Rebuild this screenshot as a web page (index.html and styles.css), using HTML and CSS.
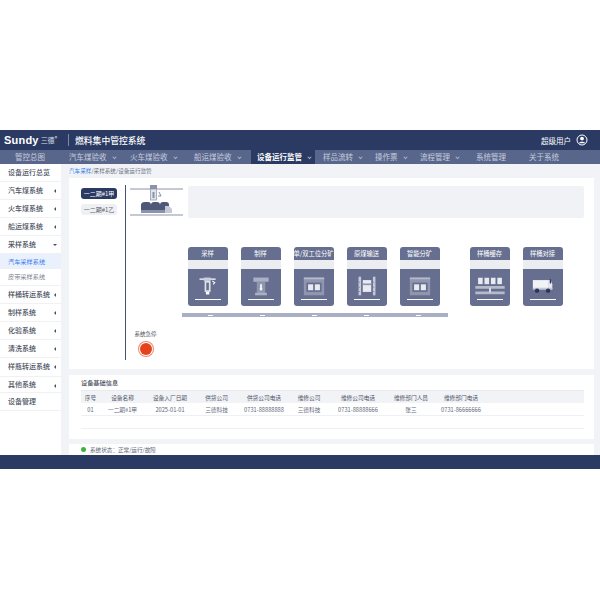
FILE: index.html
```html
<!DOCTYPE html>
<html lang="zh-CN">
<head>
    <meta charset="UTF-8">
    <meta name="viewport" content="width=device-width, initial-scale=1.0">
    <title>燃料集中管控系统</title>
    <link rel="stylesheet" href="styles.css">
</head>
<body>
    <svg class="defs" aria-hidden="true">
        <symbol id="icon-sampler" viewBox="0 0 26 26">
            <path d="M3 5h19" stroke="#fff" stroke-width="1.5"/>
            <rect x="8" y="3" width="8" height="4" fill="#c9cedc"/>
            <rect x="9" y="7" width="7" height="13" fill="#dfe2ea"/>
            <rect x="11" y="9" width="3" height="9" fill="#66708f"/>
            <rect x="10.500" y="20" width="4" height="3" fill="#fff"/>
            <path d="M18 7l3 2-2 2" fill="none" stroke="#fff" stroke-width="1.2"/>
        </symbol>
        <symbol id="icon-prep" viewBox="0 0 26 26">
            <rect x="4" y="3" width="18" height="5" fill="#aab0c4"/>
            <rect x="8" y="8" width="10" height="15" fill="#8f97b0"/>
            <rect x="6" y="21" width="14" height="3" fill="#aab0c4"/>
            <path d="M13 11v6" stroke="#fff" stroke-width="2"/>
            <path d="M11 16h4l-2 3z" fill="#fff"/>
        </symbol>
        <symbol id="icon-divider" viewBox="0 0 26 26">
            <rect x="1" y="3" width="24" height="21" fill="#9096ae"/>
            <rect x="1" y="3" width="24" height="2" fill="#b6bbcc"/>
            <rect x="4" y="9" width="18" height="11" fill="#666f8f"/>
            <rect x="6" y="11" width="6" height="7" fill="#e8eaf0"/>
            <rect x="14" y="11" width="6" height="7" fill="#e8eaf0"/>
        </symbol>
        <symbol id="icon-belt" viewBox="0 0 26 26">
            <rect x="3" y="2" width="3" height="22" fill="#c6cad8"/>
            <rect x="20" y="2" width="3" height="22" fill="#c6cad8"/>
            <rect x="8" y="6" width="10" height="14" fill="#e8eaf0"/>
            <rect x="8" y="10" width="10" height="2" fill="#9096ae"/>
            <path d="M4 8v1M4 14v1M4 19v1M21 8v1M21 14v1M21 19v1" stroke="#666f8f"/>
        </symbol>
        <symbol id="icon-cache" viewBox="0 0 32 24">
            <g fill="#e8eaf0">
                <rect x="3" y="3" width="5" height="7"/>
                <rect x="10" y="3" width="5" height="7"/>
                <rect x="17" y="3" width="5" height="7"/>
                <rect x="24" y="3" width="5" height="7"/>
            </g>
            <rect x="0" y="12" width="32" height="3" fill="#b6bbcc"/>
            <rect x="0" y="18" width="32" height="3" fill="#b6bbcc"/>
            <rect x="15" y="14" width="2" height="5" fill="#dfe2ea"/>
        </symbol>
        <symbol id="icon-van" viewBox="0 0 26 26">
            <rect x="1" y="6" width="18" height="11" fill="#f2f3f7"/>
            <path d="M19 6h3l2 5v6h-5z" fill="#e6e8ee"/>
            <rect x="21" y="5" width="1.500" height="5" fill="#2a3a63"/>
            <rect x="1" y="15" width="23" height="2" fill="#c6cad8"/>
            <circle cx="6" cy="18.500" r="2.600" fill="#2f3550"/>
            <circle cx="19" cy="18.500" r="2.600" fill="#2f3550"/>
        </symbol>
    </svg>

    <div class="app">
        <header class="topbar">
            <div class="brand">
                <span class="brand-name">Sundy</span>
                <span class="brand-cn">三德</span>
                <span class="brand-mark">®</span>
            </div>
            <h1 class="system-title">燃料集中管控系统</h1>
            <div class="user">
                <span>超级用户</span>
                <svg class="user-icon" viewBox="0 0 12 12">
                    <circle cx="6" cy="6" r="5" fill="none" stroke="#fff" stroke-width="1"/>
                    <circle cx="6" cy="4.600" r="1.900" fill="#fff"/>
                    <path d="M2.800 9.200c.5-2 5.900-2 6.400 0z" fill="#fff"/>
                </svg>
            </div>
        </header>

        <nav class="nav">
            <a class="nav-item">管控总图</a>
            <a class="nav-item">汽车煤验收<i class="chev"></i></a>
            <a class="nav-item">火车煤验收<i class="chev"></i></a>
            <a class="nav-item">船运煤验收<i class="chev"></i></a>
            <a class="nav-item active">设备运行监管<i class="chev"></i></a>
            <a class="nav-item">样品流转<i class="chev"></i></a>
            <a class="nav-item">操作票<i class="chev"></i></a>
            <a class="nav-item">流程管理<i class="chev"></i></a>
            <a class="nav-item">系统管理</a>
            <a class="nav-item">关于系统</a>
        </nav>

        <div class="content">
            <aside class="sidebar">
                <div class="side-item">设备运行总览</div>
                <div class="side-item more">汽车煤系统</div>
                <div class="side-item more">火车煤系统</div>
                <div class="side-item more">船运煤系统</div>
                <div class="side-item open">采样系统</div>
                <div class="side-sub current">汽车采样系统</div>
                <div class="side-sub last">皮带采样系统</div>
                <div class="side-item more">样桶转运系统</div>
                <div class="side-item more">制样系统</div>
                <div class="side-item more">化验系统</div>
                <div class="side-item more">清洗系统</div>
                <div class="side-item more tall">样瓶转运系统</div>
                <div class="side-item more short">其他系统</div>
                <div class="side-item">设备管理</div>
            </aside>

            <main class="main">
                <div class="crumbs"><span class="crumb-link">汽车采样</span>/采样系统/设备运行监管</div>

                <section class="panel monitor">
                    <div class="lines">
                        <button class="line-btn selected">一二期#1甲</button>
                        <button class="line-btn">一二期#1乙</button>
                    </div>
                    <div class="stage">
                        <div class="stage-top">
                            <svg class="truck" viewBox="0 0 53 32">
                                <path d="M0 4h53M0 30h53" stroke="#8b93ab" stroke-width="1.200"/>
                                <rect x="20" y="0" width="7" height="4" fill="#8b93ab"/>
                                <rect x="20.500" y="4" width="6" height="11" fill="#dfe3ea" stroke="#8b93ab" stroke-width=".7"/>
                                <rect x="22.500" y="7" width="2" height="6" fill="#8b93ab"/>
                                <path d="M29 7l2 4h-3" fill="none" stroke="#6b7490" stroke-width=".8"/>
                                <path d="M11 20q0-3 4-3h3q3 0 3 3q0-3 3-3h3q3 0 3 3q0-3 3-3h3q3 0 3 3v5H11z" fill="#4d5778"/>
                                <rect x="11" y="25" width="24" height="3" fill="#8b93ab"/>
                                <path d="M35 21h4l3 3v4h-7z" fill="#c6cad8"/>
                            </svg>
                            <div class="stage-info"></div>
                        </div>

                        <div class="cards">
                            <div class="card"><div class="card-head">采样</div><div class="card-band"></div><div class="card-body"><svg class="card-icon"><use href="#icon-sampler"/></svg><span class="card-bar"></span></div></div>
                            <div class="card"><div class="card-head">制样</div><div class="card-band"></div><div class="card-body"><svg class="card-icon"><use href="#icon-prep"/></svg><span class="card-bar"></span></div></div>
                            <div class="card"><div class="card-head clip">单/双工位分矿</div><div class="card-band"></div><div class="card-body"><svg class="card-icon"><use href="#icon-divider"/></svg><span class="card-bar"></span></div></div>
                            <div class="card"><div class="card-head">原煤输送</div><div class="card-band"></div><div class="card-body"><svg class="card-icon"><use href="#icon-belt"/></svg><span class="card-bar"></span></div></div>
                            <div class="card"><div class="card-head">智能分矿</div><div class="card-band"></div><div class="card-body"><svg class="card-icon"><use href="#icon-divider"/></svg><span class="card-bar"></span></div></div>
                            <div class="card after-gap"><div class="card-head">样桶缓存</div><div class="card-band"></div><div class="card-body"><svg class="card-icon wide"><use href="#icon-cache"/></svg><span class="card-bar"></span></div></div>
                            <div class="card"><div class="card-head">样桶对接</div><div class="card-band"></div><div class="card-body"><svg class="card-icon"><use href="#icon-van"/></svg><span class="card-bar"></span></div></div>
                        </div>

                        <div class="rail">
                            <i></i><i></i><i></i><i></i><i></i>
                        </div>

                        <div class="estop">
                            <div class="estop-label">系统急停</div>
                            <div class="estop-btn"></div>
                        </div>
                    </div>
                </section>

                <section class="panel info">
                    <h3>设备基础信息</h3>
                    <table class="info-table">
                        <colgroup>
                            <col class="c1"><col class="c2"><col class="c3"><col class="c4"><col class="c5">
                            <col class="c6"><col class="c7"><col class="c8"><col class="c9"><col>
                        </colgroup>
                        <thead>
                            <tr>
                                <th>序号</th><th>设备名称</th><th>设备入厂日期</th><th>供货公司</th><th>供货公司电话</th>
                                <th>维修公司</th><th>维修公司电话</th><th>维修部门人员</th><th>维修部门电话</th><th></th>
                            </tr>
                        </thead>
                        <tbody>
                            <tr>
                                <td>01</td><td>一二期#1甲</td><td>2025-01-01</td><td>三德科技</td><td>0731-88888888</td>
                                <td>三德科技</td><td>0731-88888666</td><td>张三</td><td>0731-86666666</td><td></td>
                            </tr>
                            <tr>
                                <td></td><td></td><td></td><td></td><td></td><td></td><td></td><td></td><td></td><td></td>
                            </tr>
                        </tbody>
                    </table>
                </section>

                <section class="panel status">
                    <span class="status-dot"></span>
                    <span>系统状态：正常/运行/故障</span>
                </section>
            </main>
        </div>

        <footer class="footer"></footer>
    </div>
</body>
</html>
```
FILE: styles.css
```css
body {
    margin: 0;
    background: #ffffff;
    font-family: "Noto Sans CJK SC", "Noto Sans", sans-serif;
    color: #444b5e;
}

.defs {
    position: absolute;
    width: 0;
    height: 0;
}

.app {
    margin-top: 130px;
    height: 339px;
    display: flex;
    flex-direction: column;
    overflow: hidden;
}

/* top bar */
.topbar {
    height: 20px;
    flex: none;
    background: #2a3a63;
    color: #fff;
    display: flex;
    align-items: center;
    padding: 0 12px 0 4px;
}

.brand {
    display: flex;
    align-items: center;
    width: 64px;
    height: 12px;
    border-right: 1px solid #7d88a8;
    line-height: 12px;
}

.brand-name {
    font-family: "Liberation Sans", sans-serif;
    font-weight: bold;
    font-size: 11px;
    letter-spacing: .2px;
}

.brand-cn {
    font-size: 7px;
    margin-left: 2px;
    color: #dfe3ee;
}

.brand-mark {
    font-size: 5px;
    margin-top: -5px;
}

.system-title {
    margin: 0 0 0 6px;
    font-size: 8.800px;
    font-weight: 500;
}

.user {
    margin-left: auto;
    display: flex;
    align-items: center;
    gap: 5px;
    font-size: 7.500px;
}

.user-icon {
    width: 12px;
    height: 12px;
}

/* nav */
.nav {
    height: 14px;
    flex: none;
    background: #59668c;
    color: #c6ccdc;
    font-size: 7.500px;
    line-height: 14px;
    display: grid;
    grid-template-columns: 54px 61px 64px 63px 66px 52px 45px 56px 53px 1fr;
    padding-left: 9px;
}

.nav-item {
    padding-left: 6px;
    white-space: nowrap;
}

.nav-item.active {
    width: 64px;
    box-sizing: border-box;
    background: #2a3a63;
    color: #fff;
    font-weight: bold;
}

.chev {
    display: inline-block;
    width: 2px;
    height: 2px;
    margin-left: 6px;
    border-right: 1px solid #a9b1c8;
    border-bottom: 1px solid #a9b1c8;
    transform: rotate(45deg) translate(-1px, -1px);
}

.content {
    flex: 1;
    display: flex;
    min-height: 0;
    background: #f1f3f7;
}

/* sidebar */
.sidebar {
    width: 61px;
    flex: none;
    background: #fff;
    font-size: 7px;
}

.side-item {
    height: 18px;
    box-sizing: border-box;
    line-height: 17px;
    padding-left: 8px;
    font-weight: 500;
    color: #4a5060;
    border-bottom: 1px solid #f0f1f4;
    position: relative;
}

.side-item.tall {
    height: 19px;
}

.side-item.short {
    height: 16px;
    line-height: 15px;
}

.side-item.more::after,
.side-item.open::after {
    content: "";
    position: absolute;
    right: 5px;
    top: 7px;
    border: 2px solid transparent;
    border-left: 0;
    border-right-color: #4a5060;
}

.side-item.open::after {
    top: 8px;
    right: 4px;
    border: 2px solid transparent;
    border-bottom: 0;
    border-top-color: #4a5060;
}

.side-sub {
    height: 15px;
    line-height: 15px;
    padding-left: 8px;
    font-size: 6.200px;
    color: #7d8390;
}

.side-sub.current {
    background: #eaf1fd;
    color: #3b7de8;
}

.side-sub.last {
    height: 17px;
    box-sizing: border-box;
    border-bottom: 1px solid #f0f1f4;
}

/* main */
.main {
    flex: 1;
    min-width: 0;
    padding: 0 6px 0 8px;
    display: flex;
    flex-direction: column;
}

.crumbs {
    height: 14px;
    line-height: 14px;
    font-size: 5.600px;
    color: #6d7385;
}

.crumb-link {
    color: #3b7de8;
}

.panel {
    background: #fff;
    box-sizing: border-box;
}

.monitor {
    height: 191px;
    flex: none;
    display: flex;
    padding: 7px 0 9px 12px;
}

.lines {
    width: 36px;
    flex: none;
    margin: 3px 8px 0 0;
    display: flex;
    flex-direction: column;
    gap: 5px;
}

.line-btn {
    height: 11px;
    padding: 0;
    border: none;
    border-radius: 3px;
    background: #eef0f3;
    color: #5a6070;
    font-family: inherit;
    font-size: 6px;
    line-height: 11px;
}

.line-btn.selected {
    background: #2a3a63;
    color: #fff;
}

.stage {
    flex: 1;
    min-width: 0;
    padding-left: 3.500px;
    border-left: 1.500px solid #45507a;
}

.stage-top {
    display: flex;
    align-items: flex-start;
    gap: 5px;
}

.truck {
    width: 53px;
    height: 32px;
    flex: none;
}

.stage-info {
    width: 396px;
    height: 32px;
    margin-top: 1px;
    background: #f1f2f5;
    border-radius: 2px;
}

.cards {
    display: flex;
    gap: 13px;
    margin: 29px 0 0 58px;
}

.card {
    width: 40px;
    height: 59px;
    display: flex;
    flex-direction: column;
    flex: none;
    border-radius: 3px;
    overflow: hidden;
    background: #666f8f;
}

.card.after-gap {
    margin-left: 17px;
}

.card-head {
    height: 13px;
    flex: none;
    line-height: 13px;
    text-align: center;
    color: #fff;
    font-size: 6.300px;
    white-space: nowrap;
}

.card-head.clip {
    display: flex;
    justify-content: center;
    overflow: hidden;
}

.card-band {
    height: 9px;
    flex: none;
    background: #ebedf1;
}

.card-body {
    flex: 1;
    display: flex;
    flex-direction: column;
    align-items: center;
    padding-top: 6px;
}

.card-icon {
    width: 22px;
    height: 22px;
}

.card-icon.wide {
    width: 32px;
}

.card-bar {
    width: 26px;
    height: 1px;
    margin-top: 2px;
    background: #fff;
}

.rail {
    width: 266px;
    height: 4px;
    margin: 7px 0 0 52px;
    padding-left: 26px;
    box-sizing: border-box;
    background: #a9b0c4;
    display: flex;
    align-items: center;
    gap: 47px;
}

.rail i {
    width: 5px;
    height: 1px;
    background: #fff;
}

.estop {
    margin: 13px 0 0 5px;
}

.estop-label {
    height: 8px;
    line-height: 8px;
    font-size: 5.500px;
    color: #4a5060;
}

.estop-btn {
    width: 12px;
    height: 12px;
    margin: 5px 0 0 5px;
    border-radius: 50%;
    background: #e5431d;
    box-shadow: 0 0 0 1px #fff, 0 0 0 2px #ec8a70;
}

/* info table */
.info {
    height: 64px;
    flex: none;
    margin-top: 6px;
    padding: 3px 10px 0 12px;
}

.info h3 {
    margin: 0;
    height: 12px;
    line-height: 10px;
    font-size: 6.200px;
    font-weight: 500;
    color: #4a5060;
}

.info-table {
    width: 100%;
    table-layout: fixed;
    border-collapse: collapse;
    font-size: 5.700px;
    text-align: center;
}

.c1 { width: 19px; }
.c2 { width: 45px; }
.c3 { width: 50px; }
.c4 { width: 43px; }
.c5 { width: 52px; }
.c6 { width: 38px; }
.c7 { width: 60px; }
.c8 { width: 46px; }
.c9 { width: 54px; }

.info-table th {
    height: 12px;
    padding: 0;
    background: #f1f3f6;
    border-top: 1px solid #e8eaef;
    font-weight: 400;
    color: #50566a;
}

.info-table td {
    height: 12px;
    padding: 0;
    border-bottom: 1px solid #eef0f3;
    color: #60667a;
    white-space: nowrap;
}

.status {
    flex: 1;
    margin-top: 5px;
    padding-left: 12px;
    display: flex;
    align-items: center;
    gap: 4px;
    font-size: 5.600px;
    color: #60667a;
}

.status-dot {
    width: 5px;
    height: 5px;
    border-radius: 50%;
    background: #3cb43c;
}

.footer {
    height: 14px;
    flex: none;
    background: #2a3a63;
}
```
